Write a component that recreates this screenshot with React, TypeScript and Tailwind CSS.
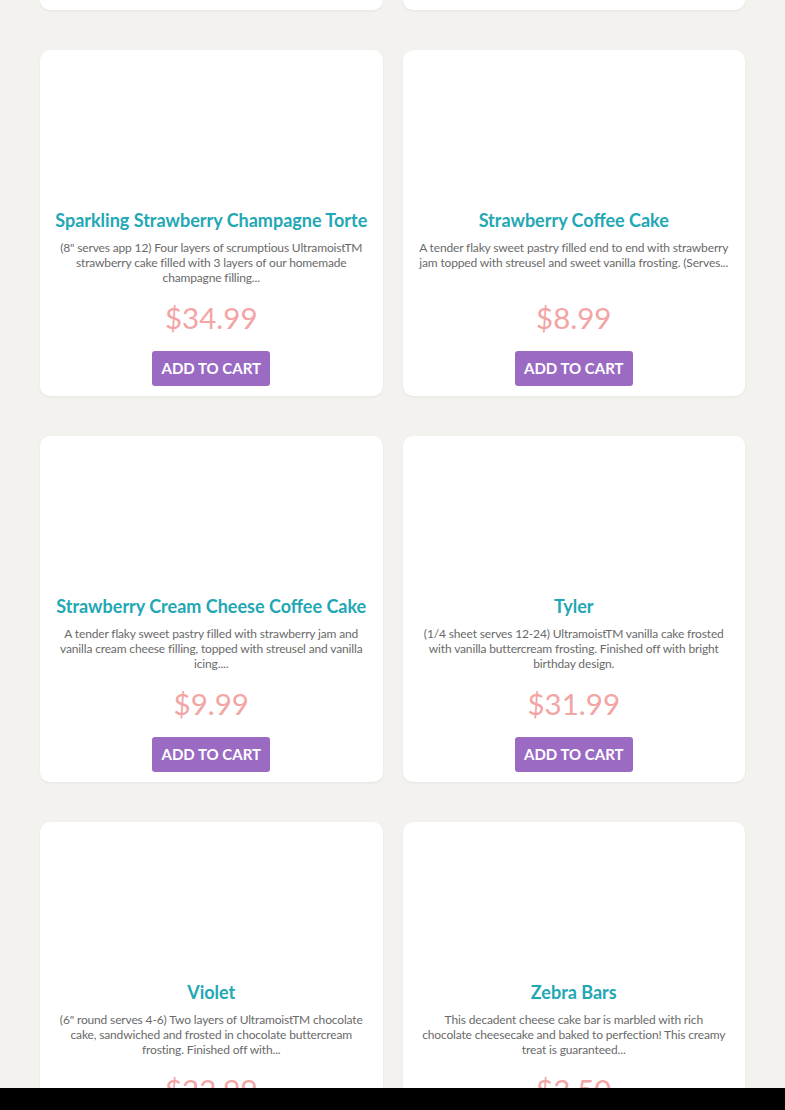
import React from "react";

type Item = { title: string; desc: string[]; price: string };

const rows: Item[][] = [
  [
    {
      title: "Sparkling Strawberry Champagne Torte",
      desc: [
        "(8\" serves app 12) Four layers of scrumptious UltramoistTM",
        "strawberry cake filled with 3 layers of our homemade",
        "champagne filling...",
      ],
      price: "$34.99",
    },
    {
      title: "Strawberry Coffee Cake",
      desc: [
        "A tender flaky sweet pastry filled end to end with strawberry",
        "jam topped with streusel and sweet vanilla frosting. (Serves...",
      ],
      price: "$8.99",
    },
  ],
  [
    {
      title: "Strawberry Cream Cheese Coffee Cake",
      desc: [
        "A tender flaky sweet pastry filled with strawberry jam and",
        "vanilla cream cheese filling, topped with streusel and vanilla",
        "icing....",
      ],
      price: "$9.99",
    },
    {
      title: "Tyler",
      desc: [
        "(1/4 sheet serves 12-24) UltramoistTM vanilla cake frosted",
        "with vanilla buttercream frosting. Finished off with bright",
        "birthday design.",
      ],
      price: "$31.99",
    },
  ],
  [
    {
      title: "Violet",
      desc: [
        "(6\" round serves 4-6) Two layers of UltramoistTM chocolate",
        "cake, sandwiched and frosted in chocolate buttercream",
        "frosting. Finished off with...",
      ],
      price: "$22.99",
    },
    {
      title: "Zebra Bars",
      desc: [
        "This decadent cheese cake bar is marbled with rich",
        "chocolate cheesecake and baked to perfection! This creamy",
        "treat is guaranteed...",
      ],
      price: "$3.50",
    },
  ],
];

function Card({ item }: { item: Item }) {
  return (
    <div className="flex flex-col items-center rounded-[10px] bg-white pb-[10px] shadow-[0_1px_3px_rgba(0,0,0,0.06)]">
      <div className="h-[159px] w-full" />
      <div className="h-[22px] text-[18px] leading-[22px] font-bold text-[#22a7b4]">
        {item.title}
      </div>
      <div className="mt-[9px] flex h-[45px] flex-col items-center text-center text-[12px] leading-[15px] tracking-[-0.15px] text-[#6a6a6a]">
        {item.desc.map((line, k) => (
          <span key={k} className="whitespace-nowrap">
            {line}
          </span>
        ))}
      </div>
      <div className="mt-[13px] h-[40px] text-[29.5px] leading-[40px] text-[#f3a4a4]">
        {item.price}
      </div>
      <button className="mt-[13px] h-[35px] rounded-[3px] bg-[#9b6bc4] px-[9px] text-[15px] font-bold text-white">
        ADD TO CART
      </button>
    </div>
  );
}

export default function App() {
  return (
    <div
      className="min-h-[1110px] bg-[#f3f2ee] px-10 pb-10"
      style={{ fontFamily: "Lato, 'Open Sans', sans-serif" }}
    >
      <div className="flex flex-col gap-10">
        <div className="grid grid-cols-2 gap-5">
          <div className="h-[10px] rounded-b-[10px] bg-white shadow-[0_1px_3px_rgba(0,0,0,0.06)]" />
          <div className="h-[10px] rounded-b-[10px] bg-white shadow-[0_1px_3px_rgba(0,0,0,0.06)]" />
        </div>
        {rows.map((row, i) => (
          <div key={i} className="grid grid-cols-2 gap-5">
            {row.map((item, j) => (
              <Card key={j} item={item} />
            ))}
          </div>
        ))}
      </div>
      <div className="fixed bottom-0 left-0 h-[22px] w-full bg-black" />
    </div>
  );
}
